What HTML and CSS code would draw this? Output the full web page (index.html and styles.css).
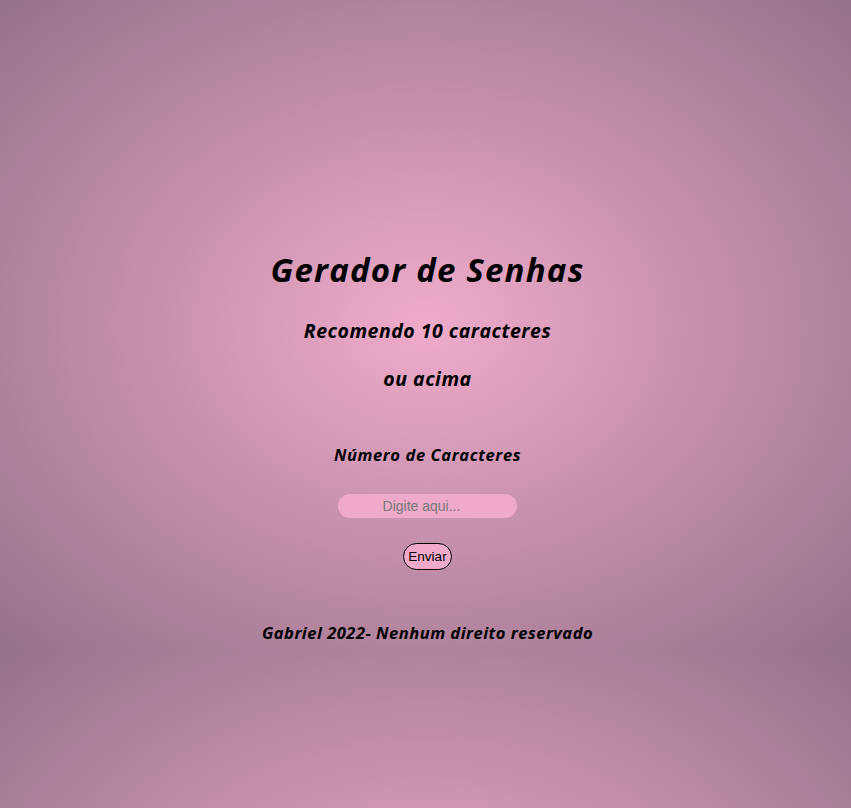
FILE: index.html
```html
<!DOCTYPE html>
<html lang="pt-BR">
<head>
<meta charset="utf-8">
<title>Gerador de Senhas</title>
<link rel="stylesheet" href="styles.css">
</head>
<body>
<main class="page">
  <h1 class="title">Gerador de Senhas</h1>
  <h2 class="subtitle">Recomendo 10 caracteres</h2>
  <h2 class="subtitle subtitle-second">ou acima</h2>
  <h3 class="label">Número de Caracteres</h3>
  <input class="field" type="text" placeholder="Digite aqui...">
  <button class="btn" type="button">Enviar</button>
  <footer class="footer">Gabriel 2022- Nenhum direito reservado</footer>
</main>
</body>
</html>
```

FILE: styles.css
```css
html {
  margin: 0;
  height: 100%;
  background-color: #987489;
  background-image: radial-gradient(ellipse farthest-corner at 50% 50%, #efabca 0%, #96728a 100%);
  background-size: 100% 650px;
  background-repeat: repeat;
}

body {
  margin: 0;
  font-family: "Open Sans", "DejaVu Sans", sans-serif;
  color: #000;
}

.page {
  display: flex;
  flex-direction: column;
  align-items: center;
  padding-top: 250px;
  padding-left: 4px;
}

.title {
  margin: 0;
  font-size: 33px;
  font-weight: 700;
  font-style: italic;
  line-height: 40px;
  letter-spacing: 1.2px;
}

.subtitle {
  margin: 28px 0 0;
  font-size: 19.5px;
  font-weight: 700;
  font-style: italic;
  line-height: 26px;
  letter-spacing: 0.5px;
}

.subtitle-second {
  margin-top: 22px;
}

.label {
  margin: 52px 0 0;
  font-size: 16.5px;
  font-weight: 700;
  font-style: italic;
  line-height: 22px;
  letter-spacing: 0.6px;
}

.field {
  margin-top: 28px;
  width: 179px;
  height: 24px;
  box-sizing: border-box;
  border: none;
  border-radius: 12px;
  background: #eeaac8;
  text-align: center;
  font-family: "Liberation Sans", Arial, sans-serif;
  font-size: 14px;
  padding: 0 14px 0 2px;
  outline: none;
}

.field::placeholder {
  color: #787878;
}

.btn {
  margin-top: 25px;
  width: 49px;
  height: 27px;
  box-sizing: border-box;
  border: 1px solid #000;
  border-radius: 14px;
  background: #eeaac8;
  font-family: "Liberation Sans", Arial, sans-serif;
  font-size: 13.5px;
  color: #000;
  padding: 0;
}

.footer {
  margin-top: 52px;
  font-size: 16.5px;
  font-weight: 700;
  font-style: italic;
  line-height: 22px;
  letter-spacing: 0.5px;
}
```
